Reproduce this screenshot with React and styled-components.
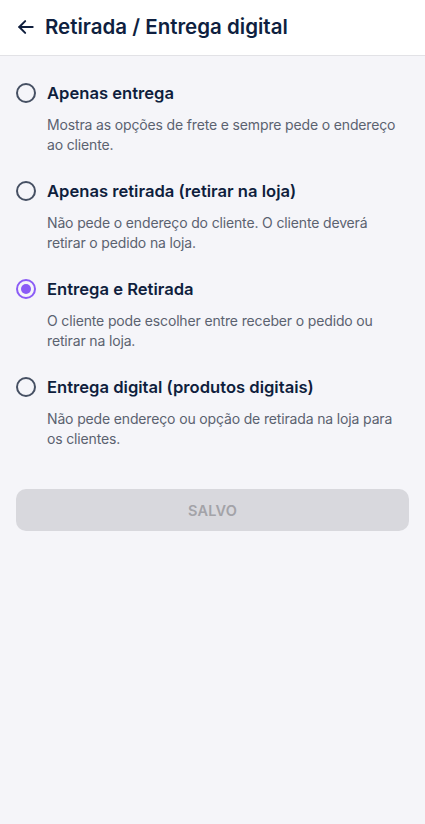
import React, { useState } from "react"
import styled, { createGlobalStyle } from "styled-components"

const GlobalStyle = createGlobalStyle`
  html, body {
    margin: 0;
    padding: 0;
    background: #f5f5f9;
    font-family: Inter, "Open Sans", sans-serif;
  }
  * { box-sizing: border-box; }
`

const Page = styled.div`
  min-height: 824px;
  background: #f5f5f9;
`

const Header = styled.header`
  height: 56px;
  background: #fff;
  border-bottom: 1px solid #e2e2e6;
  display: flex;
  align-items: center;
  gap: 9px;
  padding: 0 16px 2px;
`

const BackButton = styled.button`
  border: 0;
  background: none;
  padding: 0;
  display: flex;
  color: #0f1e3d;
`

const Title = styled.h1`
  margin: 0;
  font-size: 20.5px;
  font-weight: 600;
  color: #0f1f40;
  letter-spacing: 0;
`

const Content = styled.main`
  padding: 26px 16px 0;
`

const List = styled.div`
  display: flex;
  flex-direction: column;
  gap: 25px;
`

const Option = styled.label`
  display: grid;
  grid-template-columns: 20px 1fr;
  column-gap: 11px;
  row-gap: 11px;
  cursor: pointer;
`

const Radio = styled.span`
  width: 20px;
  height: 20px;
  border-radius: 50%;
  border: 2px solid ${p => (p.$checked ? "#8b5cf6" : "#465063")};
  display: flex;
  align-items: center;
  justify-content: center;
  margin-top: 1px;

  &::after {
    content: "";
    width: 10px;
    height: 10px;
    border-radius: 50%;
    background: ${p => (p.$checked ? "#8b5cf6" : "transparent")};
  }
`

const OptionTitle = styled.span`
  font-size: 16.6px;
  font-weight: 600;
  color: #0f1e3d;
  line-height: 22px;
`

const Description = styled.p`
  grid-column: 2;
  margin: 0;
  font-size: 14px;
  line-height: 20px;
  color: #5b6270;
  letter-spacing: -0.15px;
`

const SaveButton = styled.button`
  margin-top: 40px;
  width: 100%;
  height: 42px;
  border: 0;
  border-radius: 10px;
  background: #d8d8dd;
  color: #a3a3a8;
  font-family: inherit;
  font-size: 14.5px;
  font-weight: 600;
  letter-spacing: 0.2px;
`

const options = [
  {
    id: "entrega",
    title: "Apenas entrega",
    text: "Mostra as opções de frete e sempre pede o endereço ao cliente.",
  },
  {
    id: "retirada",
    title: "Apenas retirada (retirar na loja)",
    text: "Não pede o endereço do cliente. O cliente deverá retirar o pedido na loja.",
  },
  {
    id: "ambos",
    title: "Entrega e Retirada",
    text: "O cliente pode escolher entre receber o pedido ou retirar na loja.",
  },
  {
    id: "digital",
    title: "Entrega digital (produtos digitais)",
    text: "Não pede endereço ou opção de retirada na loja para os clientes.",
  },
]

export default function App() {
  const [selected, setSelected] = useState("ambos")

  return (
    <Page>
      <GlobalStyle />
      <Header>
        <BackButton aria-label="Voltar">
          <svg width="20" height="20" viewBox="0 0 24 24" fill="none" stroke="currentColor" strokeWidth="2.4" strokeLinecap="round" strokeLinejoin="round">
            <path d="M20 12H4" />
            <path d="M11 5l-7 7 7 7" />
          </svg>
        </BackButton>
        <Title>Retirada / Entrega digital</Title>
      </Header>
      <Content>
        <List>
          {options.map(o => (
            <Option key={o.id} onClick={() => setSelected(o.id)}>
              <Radio $checked={selected === o.id} />
              <OptionTitle>{o.title}</OptionTitle>
              <Description>{o.text}</Description>
            </Option>
          ))}
        </List>
        <SaveButton disabled>SALVO</SaveButton>
      </Content>
    </Page>
  )
}
